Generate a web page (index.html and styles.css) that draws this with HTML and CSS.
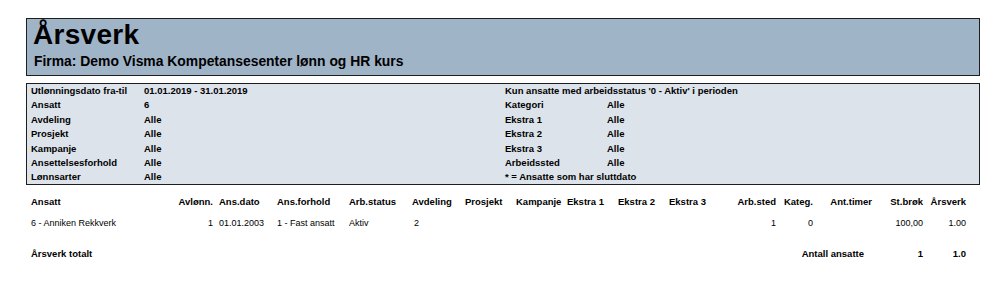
FILE: index.html
```html
<!DOCTYPE html>
<html lang="no">
<head>
<meta charset="utf-8">
<title>Årsverk</title>
<link rel="stylesheet" href="styles.css">
</head>
<body>
<div class="report">
  <header class="title-box">
    <h1 class="title">Årsverk</h1>
    <div class="firm">Firma: Demo Visma Kompetansesenter lønn og HR kurs</div>
  </header>

  <section class="filters">
    <div class="fcol">
      <div class="frow"><span class="flabel">Utlønningsdato fra-til</span><span class="fval">01.01.2019 - 31.01.2019</span></div>
      <div class="frow"><span class="flabel">Ansatt</span><span class="fval">6</span></div>
      <div class="frow"><span class="flabel">Avdeling</span><span class="fval">Alle</span></div>
      <div class="frow"><span class="flabel">Prosjekt</span><span class="fval">Alle</span></div>
      <div class="frow"><span class="flabel">Kampanje</span><span class="fval">Alle</span></div>
      <div class="frow"><span class="flabel">Ansettelsesforhold</span><span class="fval">Alle</span></div>
      <div class="frow"><span class="flabel">Lønnsarter</span><span class="fval">Alle</span></div>
    </div>
    <div class="fcol fcol-right">
      <div class="frow"><span class="fnote">Kun ansatte med arbeidsstatus '0 - Aktiv' i perioden</span></div>
      <div class="frow"><span class="flabel">Kategori</span><span class="fval">Alle</span></div>
      <div class="frow"><span class="flabel">Ekstra 1</span><span class="fval">Alle</span></div>
      <div class="frow"><span class="flabel">Ekstra 2</span><span class="fval">Alle</span></div>
      <div class="frow"><span class="flabel">Ekstra 3</span><span class="fval">Alle</span></div>
      <div class="frow"><span class="flabel">Arbeidssted</span><span class="fval">Alle</span></div>
      <div class="frow"><span class="fnote">* = Ansatte som har sluttdato</span></div>
    </div>
  </section>

  <div class="grid head">
    <span>Ansatt</span>
    <span class="r">Avlønn.</span>
    <span class="pl">Ans.dato</span>
    <span>Ans.forhold</span>
    <span>Arb.status</span>
    <span>Avdeling</span>
    <span>Prosjekt</span>
    <span>Kampanje</span>
    <span>Ekstra 1</span>
    <span>Ekstra 2</span>
    <span>Ekstra 3</span>
    <span class="r">Arb.sted</span>
    <span class="r">Kateg.</span>
    <span class="r">Ant.timer</span>
    <span class="r">St.brøk</span>
    <span class="r">Årsverk</span>
  </div>

  <div class="grid row">
    <span>6 - Anniken Rekkverk</span>
    <span class="r">1</span>
    <span class="pl">01.01.2003</span>
    <span>1 - Fast ansatt</span>
    <span>Aktiv</span>
    <span class="pl2">2</span>
    <span></span>
    <span></span>
    <span></span>
    <span></span>
    <span></span>
    <span class="r">1</span>
    <span class="r">0</span>
    <span></span>
    <span class="r">100,00</span>
    <span class="r">1.00</span>
  </div>

  <div class="grid total">
    <span class="span-a">Årsverk totalt</span>
    <span class="span-b r">Antall ansatte</span>
    <span class="r">1</span>
    <span class="r">1.0</span>
  </div>
</div>
</body>
</html>
```

FILE: styles.css
```css
html, body {
  margin: 0;
  padding: 0;
  background: #ffffff;
}

body {
  font-family: "Liberation Sans", Arial, sans-serif;
  color: #000;
}

.report {
  width: 954px;
  padding: 18px 0 0 26px;
}

.title-box {
  box-sizing: border-box;
  height: 58px;
  border: 1px solid #1e1e1e;
  background: #a0b4c8;
  padding: 0 0 0 6px;
}

.title {
  margin: 0;
  font-size: 28px;
  font-weight: bold;
  line-height: 30px;
  padding-top: 1px;
  letter-spacing: 0.3px;
}

.firm {
  font-size: 13.9px;
  font-weight: bold;
  line-height: 16px;
  margin-top: 3px;
  padding-left: 1px;
}

.filters {
  box-sizing: border-box;
  margin-top: 7px;
  height: 102px;
  border: 1px solid #1e1e1e;
  background: #dce3ea;
  display: grid;
  grid-template-columns: 474px 1fr;
  padding: 0 0 0 4px;
}

.frow {
  display: flex;
  height: 14.4px;
  line-height: 14px;
  font-size: 9.5px;
  font-weight: bold;
}

.flabel {
  width: 113px;
  flex: none;
}

.fcol-right .flabel {
  width: 102px;
}

.grid {
  display: grid;
  grid-template-columns: 144px 38px 64px 72px 63px 53px 51px 51px 51px 51px 46px 61px 37px 59px 51px 43px;
  margin-left: 5px;
  line-height: 14px;
  font-size: 9px;
  white-space: nowrap;
}

.grid .r {
  text-align: right;
}

.grid .pl {
  padding-left: 6px;
}

.grid .pl2 {
  padding-left: 2px;
}

.head {
  margin-top: 10px;
  font-weight: bold;
  font-size: 9.5px;
}

.row {
  margin-top: 7px;
}

.total {
  margin-top: 17px;
  font-weight: bold;
  font-size: 9.5px;
}

.span-a {
  grid-column: 1 / 13;
}

.span-b {
  grid-column: 13 / 15;
  padding-right: 8px;
}
```
